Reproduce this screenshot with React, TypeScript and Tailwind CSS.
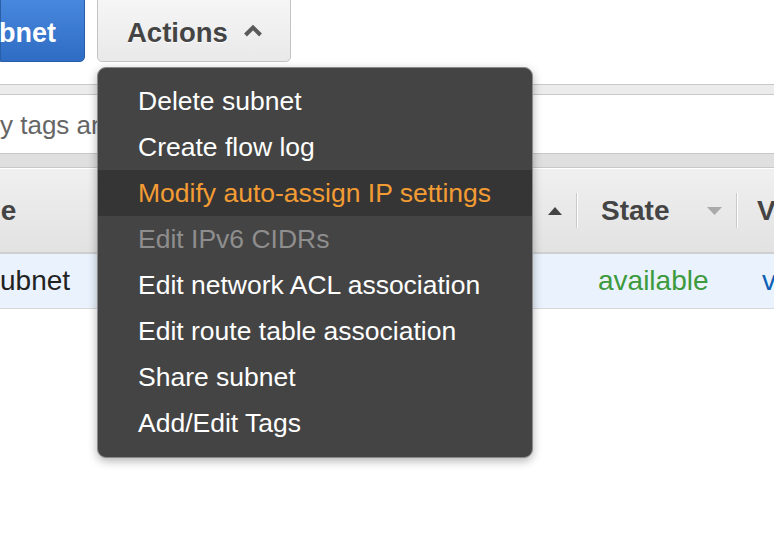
import React from "react";

const items: { label: string; state?: "active" | "disabled" }[] = [
  { label: "Delete subnet" },
  { label: "Create flow log" },
  { label: "Modify auto-assign IP settings", state: "active" },
  { label: "Edit IPv6 CIDRs", state: "disabled" },
  { label: "Edit network ACL association" },
  { label: "Edit route table association" },
  { label: "Share subnet" },
  { label: "Add/Edit Tags" },
];

function Sep() {
  return <div className="w-[2px] h-[35px] border-l border-[#c9c9c9] bg-white" />;
}

export default function App() {
  return (
    <div className="relative w-[774px] h-[552px] overflow-hidden bg-white font-['Liberation_Sans',Arial,sans-serif]">
      {/* Buttons row */}
      <div className="flex h-[61px] gap-[12px]">
        <div className="-mt-[8px] h-[70px] w-[85px] shrink-0 flex items-center justify-end pr-[28px] rounded-r-[5px] border border-[#2a5fa8] bg-gradient-to-b from-[#4a8be0] to-[#2f6cc4]">
          <span className="whitespace-nowrap text-white font-bold text-[27px] leading-none pt-[12px]">Create subnet</span>
        </div>
        <div className="-mt-[8px] h-[70px] w-[194px] shrink-0 flex items-center pl-[29px] rounded-[5px] border border-[#c4c4c4] bg-gradient-to-b from-[#f7f7f7] to-[#e9e9e9] shadow-[inset_0_1px_0_#fff]">
          <span className="whitespace-nowrap text-[#444] font-bold text-[27.5px] leading-none pt-[12px] [text-shadow:0_1px_0_#fff]">Actions</span>
          <svg className="ml-[15px] mt-[6px]" width="20" height="13" viewBox="0 0 20 13">
            <polyline points="2.5,11 10,3.5 17.5,11" fill="none" stroke="#5a5a5a" strokeWidth="4" />
          </svg>
        </div>
      </div>

      {/* Band 1 */}
      <div className="mt-[23px] h-[11px] border-y border-[#c8c8c8] bg-[#ececec]" />

      {/* Search area */}
      <div className="h-[58px] flex items-center">
        <span className="whitespace-nowrap text-[26px] text-[#666] leading-none pt-[2px]">y tags and attributes or search by keyword</span>
      </div>

      {/* Band 2 */}
      <div className="h-[15px] border-y border-[#c8c8c8] bg-[#dfdfdf]" />

      {/* Table header */}
      <div className="mt-[1px] h-[85px] border-b-[2px] border-[#cfcfcf] bg-gradient-to-b from-[#f0f0f0] to-[#e2e2e2] flex items-center">
        <div className="w-[578px] shrink-0 flex items-center">
          <span className="-ml-[60px] text-[28px] font-bold text-[#444] whitespace-nowrap">Name</span>
          <div className="flex-1" />
          <svg width="14" height="8" viewBox="0 0 14 8" className="mr-[14px]">
            <polygon points="7,0 14,8 0,8" fill="#444" />
          </svg>
          <Sep />
        </div>
        <div className="w-[160px] shrink-0 flex items-center">
          <span className="ml-[23px] text-[28px] font-bold text-[#444] whitespace-nowrap">State</span>
          <div className="flex-1" />
          <svg width="15" height="8" viewBox="0 0 15 8" className="mr-[14px]">
            <polygon points="0,0 15,0 7.5,8" fill="#aaa" />
          </svg>
          <Sep />
        </div>
        <span className="ml-[19px] text-[28px] font-bold text-[#444] whitespace-nowrap">VPC</span>
      </div>

      {/* Row */}
      <div className="h-[55px] bg-[#eaf3fd] border-b border-[#d8d8d8] flex items-center">
        <div className="w-[578px] shrink-0">
          <span className="text-[28px] text-[#222] whitespace-nowrap">ubnet</span>
        </div>
        <div className="w-[164px] shrink-0">
          <span className="ml-[20px] text-[28px] text-[#3d9a3d] whitespace-nowrap">available</span>
        </div>
        <span className="ml-[20px] text-[28px] text-[#0b5fb4] whitespace-nowrap">vpc</span>
      </div>

      {/* Dropdown menu */}
      <div className="absolute left-[97px] top-[67px] w-[436px] h-[391px] rounded-[9px] bg-[#444444] border border-[#8a8a8a] shadow-[0_3px_10px_rgba(0,0,0,0.3)] py-[10px]">
        {items.map((it) => (
          <div
            key={it.label}
            className={
              "h-[46px] flex items-center pl-[40px] text-[26.5px] leading-none whitespace-nowrap " +
              (it.state === "active"
                ? "bg-[#353535] text-[#f39c34]"
                : it.state === "disabled"
                ? "text-[#8e8e8e]"
                : "text-white")
            }
          >
            {it.label}
          </div>
        ))}
      </div>
    </div>
  );
}
